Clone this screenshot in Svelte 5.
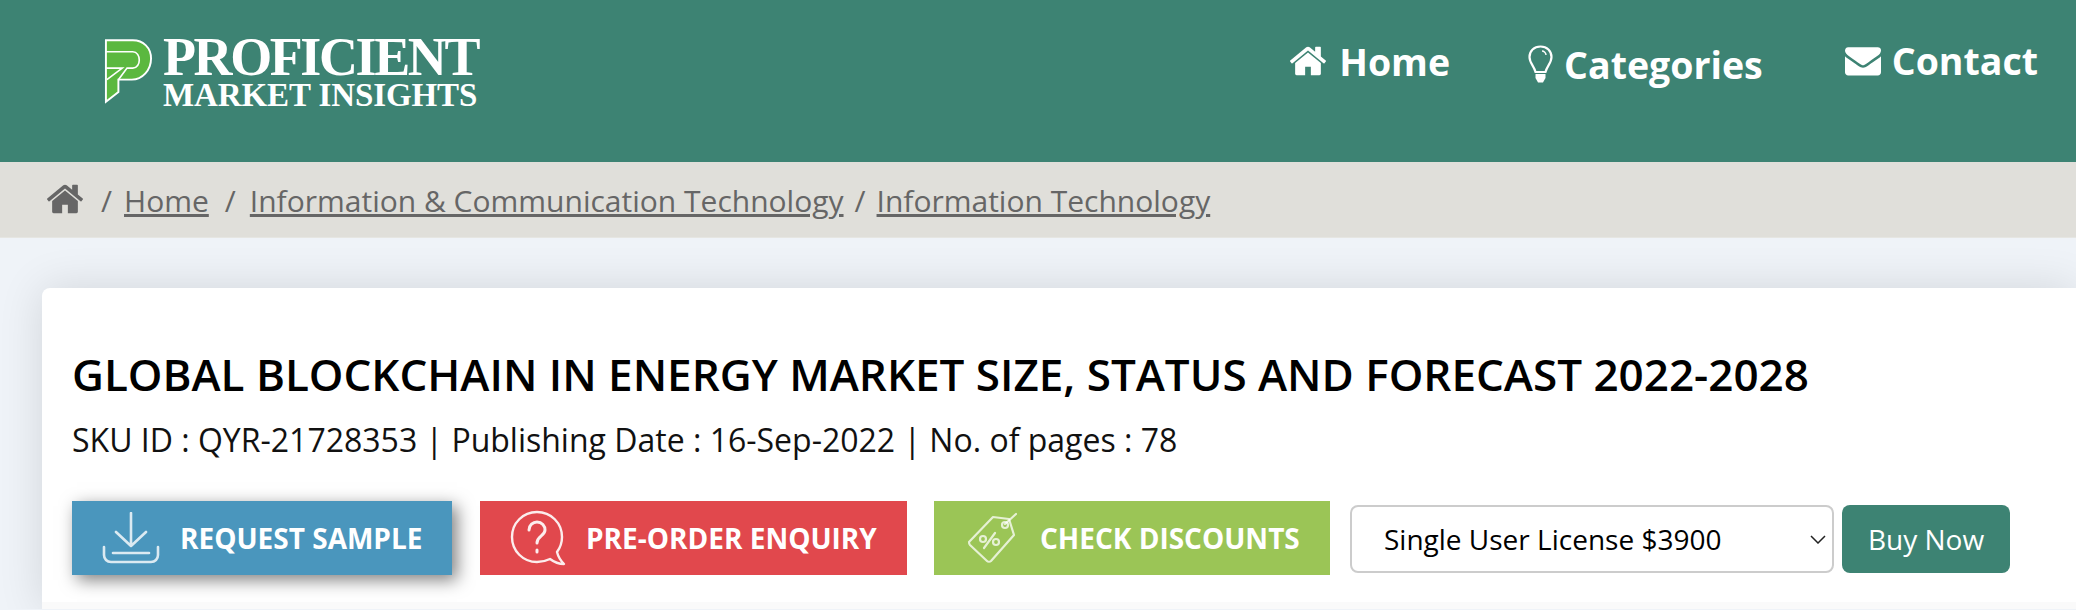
<script>
    const crumbs = ["Home", "Information & Communication Technology", "Information Technology"];
</script>

<header class="topbar">
    <a class="logo" href="#top">
        <svg class="logo-mark" viewBox="0 0 50 68" width="48" height="66">
            <path d="M2 2H30C41 2 49 10 49 21C49 33 40 43 29 43H15V56L2 66Z" fill="#5bb83f" stroke="#fff" stroke-width="2" />
            <path d="M2 14H30C39 14 39 31 30 31H24L15 43" fill="none" stroke="#fff" stroke-width="1.7" />
            <path d="M2 31H19L3 43" fill="none" stroke="#fff" stroke-width="1.7" />
        </svg>
        <span class="logo-text">
            <span class="logo-top">PROFICIENT</span>
            <span class="logo-bottom">MARKET INSIGHTS</span>
        </span>
    </a>
    <nav class="nav">
        <a class="nav-item home" href="#top">
            <svg viewBox="0 0 1792 1792" width="40" height="40" fill="#fff">
                <path d="M1472 992v480q0 26-19 45t-45 19h-384v-384h-256v384h-384q-26 0-45-19t-19-45v-480q0-1 .5-3t.5-3l575-474 575 474q1 2 1 6zm223-69l-62 74q-8 9-21 11h-3q-13 0-21-7l-692-577-692 577q-12 8-24 7-13-2-21-11l-62-74q-8-10-7-23.5t11-21.5l719-599q32-26 76-26t76 26l244 204v-195q0-14 9-23t23-9h192q14 0 23 9t9 23v408l219 182q10 8 11 21.5t-7 23.5z" />
            </svg>
            Home
        </a>
        <a class="nav-item categories" href="#top">
            <svg viewBox="0 0 25 38" width="25" height="38">
                <path d="M12.5 1.5C6 1.5 1.5 6 1.5 12C1.5 18 6 21 7.5 27H17.5C19 21 23.5 18 23.5 12C23.5 6 19 1.5 12.5 1.5Z" fill="none" stroke="#fff" stroke-width="2.2" />
                <path d="M7.5 29H17.5V33L15 37.5H10L7.5 33Z" fill="#fff" />
                <path d="M14 6C16 6 18 8 18 10" fill="none" stroke="#fff" stroke-width="1.4" />
            </svg>
            Categories
        </a>
        <a class="nav-item contact" href="#top">
            <svg viewBox="0 0 1792 1792" width="36" height="36" fill="#fff">
                <path d="M1792 710v794q0 66-47 113t-113 47h-1472q-66 0-113-47t-47-113v-794q44 49 101 87 362 246 497 345 57 42 92.5 65.5t94.5 48 110 24.5h2q51 0 110-24.5t94.5-48 92.5-65.5q170-123 498-345 57-39 100-87zm0-294q0 79-49 151t-122 123q-376 261-468 325-10 7-42.5 30.5t-54 38-52 32.5-57.5 27-50 9h-2q-23 0-50-9t-57.5-27-52-32.5-54-38-42.5-30.5q-91-64-262-182.5t-205-142.5q-62-42-117-115.5t-55-136.5q0-78 41.5-130t118.5-52h1472q65 0 112.5 47t47.5 113z" />
            </svg>
            Contact
        </a>
    </nav>
</header>

<div class="breadcrumb">
    <svg viewBox="0 0 1792 1792" width="40" height="40" fill="#666">
        <path d="M1472 992v480q0 26-19 45t-45 19h-384v-384h-256v384h-384q-26 0-45-19t-19-45v-480q0-1 .5-3t.5-3l575-474 575 474q1 2 1 6zm223-69l-62 74q-8 9-21 11h-3q-13 0-21-7l-692-577-692 577q-12 8-24 7-13-2-21-11l-62-74q-8-10-7-23.5t11-21.5l719-599q32-26 76-26t76 26l244 204v-195q0-14 9-23t23-9h192q14 0 23 9t9 23v408l219 182q10 8 11 21.5t-7 23.5z" />
    </svg>
    {#each crumbs as crumb, i}
        <span class="sep" class:mid={i === 1} class:tight={i === 2}>/</span>
        <a href="#top">{crumb}</a>
    {/each}
</div>

<main class="page">
    <section class="card">
        <h1>GLOBAL BLOCKCHAIN IN ENERGY MARKET SIZE, STATUS AND FORECAST 2022-2028</h1>
        <p class="meta">SKU ID : QYR-21728353 | Publishing Date : 16-Sep-2022 | No. of pages : 78</p>
        <div class="actions">
            <button class="cta blue">
                <svg viewBox="0 0 58 52" width="58" height="52" fill="none" stroke="#fff" stroke-opacity="0.8" stroke-width="2.6" stroke-linecap="round" stroke-linejoin="round">
                    <path d="M29 1V33M14 20L29 34L44 20" />
                    <path d="M2 35V43C2 47 5 50 9 50H49C53 50 56 47 56 43V35" />
                    <path d="M11 41H47" />
                </svg>
                REQUEST SAMPLE
            </button>
            <button class="cta red">
                <svg viewBox="0 0 56 56" width="56" height="56" fill="none" stroke="#fff" stroke-opacity="0.9" stroke-width="2.4" stroke-linecap="round" stroke-linejoin="round">
                    <path d="M40 49C36 51 31 52 27 52C13 52 2 41 2 27C2 13 13 2 27 2C41 2 52 13 52 27C52 33 50 38 47 42C48 46 50 50 54 54C48 54 44 52 40 49Z" />
                    <path d="M19 20C19 15 23 12 27 12C32 12 35 16 35 20C35 26 27 26 27 33" stroke-width="3" />
                    <path d="M27 40V42" stroke-width="3" />
                </svg>
                PRE-ORDER ENQUIRY
            </button>
            <button class="cta green">
                <svg viewBox="0 0 50 52" width="50" height="52" fill="none" stroke="#fff" stroke-opacity="0.75" stroke-width="2.2" stroke-linecap="round" stroke-linejoin="round">
                    <path d="M2 30L26 5L42 7L47 23L24 49C23 50 21 50 20 49L3 33C2 32 2 31 2 30Z" />
                    <circle cx="38" cy="13" r="3" />
                    <path d="M38 12L49 2" />
                    <path d="M17 36L28 21" />
                    <circle cx="16" cy="27" r="3" />
                    <circle cx="29" cy="30" r="3" />
                </svg>
                CHECK DISCOUNTS
            </button>
            <div class="license">
                <select>
                    <option>Single User License $3900</option>
                    <option>Multi User License $5850</option>
                    <option>Enterprise User License $7800</option>
                </select>
                <svg class="chevron" viewBox="0 0 16 9" width="16" height="9" fill="none" stroke="#222" stroke-width="1.5">
                    <path d="M1 1L8 8L15 1" />
                </svg>
            </div>
            <button class="buy">Buy Now</button>
        </div>
        <div class="strip"></div>
    </section>
</main>

<style>
    :global(body) {
        margin: 0;
        background: #eff3f8;
        font-family: "Open Sans", sans-serif;
        overflow: hidden;
    }

    a {
        color: inherit;
        text-decoration: none;
    }

    .topbar {
        height: 162px;
        background: #3d8373;
        display: flex;
        justify-content: space-between;
        padding: 0 38px 0 104px;
        box-sizing: border-box;
    }

    .logo {
        display: flex;
        align-items: flex-start;
        gap: 11px;
        padding-top: 34px;
        color: #fff;
    }

    .logo-mark {
        margin-top: 4px;
    }

    .logo-text {
        display: flex;
        flex-direction: column;
        font-family: "Liberation Serif", serif;
        font-weight: bold;
    }

    .logo-top {
        font-size: 54px;
        line-height: 46px;
        letter-spacing: -2.4px;
    }

    .logo-bottom {
        font-size: 33px;
        line-height: 30px;
        letter-spacing: -0.1px;
    }

    .nav {
        display: flex;
        gap: 78px;
        padding-top: 37px;
        color: #fff;
        font-weight: 700;
        font-size: 37.5px;
    }

    .nav-item {
        display: flex;
        align-items: center;
        gap: 11px;
        height: 48px;
    }

    .categories {
        margin-top: 3px;
        margin-left: 0;
    }

    .contact {
        margin-top: -1px;
        margin-left: 4px;
    }

    .breadcrumb {
        height: 76px;
        background: #e0dfda;
        border-bottom: 1px solid #e6e6e2;
        box-sizing: border-box;
        display: flex;
        align-items: center;
        padding: 2px 0 0 45px;
        color: #666;
        font-size: 30px;
    }

    .breadcrumb svg {
        margin-bottom: 4px;
    }

    .breadcrumb a {
        text-decoration: underline;
    }

    .sep {
        margin: 0 12px 0 16px;
    }

    .sep.mid {
        margin-right: 14px;
    }

    .sep.tight {
        margin: 0 11px 0 11px;
    }

    .page {
        padding: 50px 0 0 42px;
    }

    .card {
        height: 321px;
        background: #fff;
        border-radius: 8px 0 0 0;
        box-shadow: 0 0 45px rgba(0, 0, 0, 0.12);
        padding: 61px 0 0 30px;
        box-sizing: border-box;
        display: flex;
        flex-direction: column;
        position: relative;
    }

    h1 {
        margin: 0;
        color: #000;
        font-size: 44px;
        font-weight: 600;
        line-height: 50px;
        white-space: nowrap;
    }

    .meta {
        margin: 21px 0 0;
        color: #111;
        font-size: 32px;
        line-height: 40px;
        white-space: nowrap;
    }

    .actions {
        display: flex;
        align-items: center;
        margin-top: 41px;
        height: 74px;
    }

    button {
        font-family: inherit;
        border: 0;
        color: #fff;
        padding: 0;
    }

    .cta {
        height: 74px;
        display: flex;
        align-items: center;
        font-size: 28px;
        font-weight: 700;
    }

    .blue {
        width: 380px;
        background: #4a96bd;
        box-shadow: 5px 5px 16px rgba(0, 0, 0, 0.5);
        padding-left: 30px;
        gap: 20px;
        margin-right: 28px;
    }

    .red {
        width: 427px;
        background: #e1484d;
        padding-left: 30px;
        gap: 20px;
        margin-right: 27px;
    }

    .green {
        width: 396px;
        background: #9bc556;
        padding-left: 33px;
        gap: 23px;
        margin-right: 20px;
    }

    .license {
        position: relative;
        margin: 2px 8px 0 0;
    }

    select {
        display: block;
        appearance: none;
        width: 484px;
        height: 68px;
        background: #fff;
        border: 2px solid #ccc;
        border-radius: 8px;
        padding: 0 0 0 32px;
        box-sizing: border-box;
        font-family: inherit;
        font-size: 28px;
        color: #000;
    }

    .chevron {
        position: absolute;
        left: 460px;
        top: 30px;
        pointer-events: none;
    }

    .buy {
        width: 168px;
        height: 68px;
        margin-top: 2px;
        background: #3d8373;
        border-radius: 8px;
        font-size: 28px;
    }

    .strip {
        position: absolute;
        left: 0;
        right: 0;
        bottom: 0;
        height: 7px;
        background: #fafafa;
    }
</style>
